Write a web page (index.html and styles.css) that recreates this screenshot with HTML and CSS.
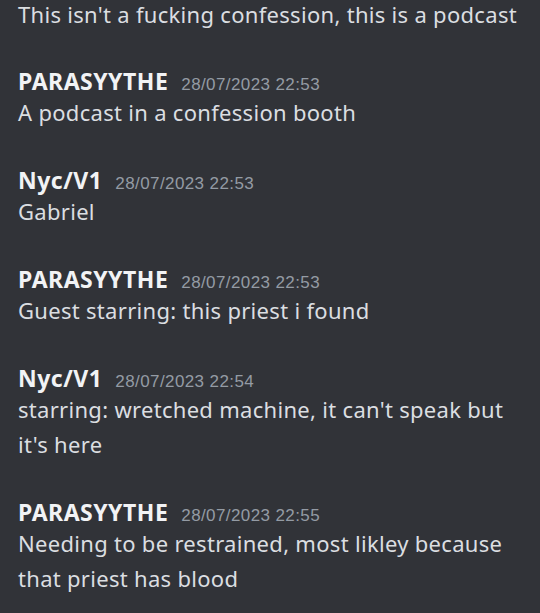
FILE: index.html
```html
<!DOCTYPE html>
<html lang="en">
<head>
    <meta charset="UTF-8">
    <title>Chat</title>
    <link rel="stylesheet" href="styles.css">
</head>
<body>
    <div class="chat">
        <div class="line first">This isn't a fucking confession, this is a podcast</div>

        <div class="msg">
            <div class="head"><span class="name">PARASYYTHE</span><span class="time">28/07/2023 22:53</span></div>
            <div class="line">A podcast in a confession booth</div>
        </div>

        <div class="msg">
            <div class="head"><span class="name">Nyc/V1</span><span class="time">28/07/2023 22:53</span></div>
            <div class="line">Gabriel</div>
        </div>

        <div class="msg">
            <div class="head"><span class="name">PARASYYTHE</span><span class="time">28/07/2023 22:53</span></div>
            <div class="line">Guest starring: this priest i found</div>
        </div>

        <div class="msg">
            <div class="head"><span class="name">Nyc/V1</span><span class="time">28/07/2023 22:54</span></div>
            <div class="line">starring: wretched machine, it can't speak but it's here</div>
        </div>

        <div class="msg">
            <div class="head"><span class="name">PARASYYTHE</span><span class="time">28/07/2023 22:55</span></div>
            <div class="line">Needing to be restrained, most likley because that priest has blood</div>
        </div>
    </div>
</body>
</html>
```

FILE: styles.css
```css
body {
    margin: 0;
    background-color: #313338;
    font-family: "Noto Sans", sans-serif;
}
.chat {
    padding: 0 18px;
    width: 504px;
}
.line {
    color: #dbdee1;
    font-size: 22px;
    letter-spacing: 0.3px;
    line-height: 35px;
    margin-top: -3px;
}
.line.first {
    margin-top: 0;
    padding-bottom: 3px;
    line-height: 28px;
}
.msg {
    margin-top: 33px;
}
.head {
    display: flex;
    align-items: baseline;
    height: 34px;
    line-height: 34px;
}
.name {
    color: #f2f3f5;
    font-size: 23px;
    font-weight: bold;
    letter-spacing: 0.5px;
}
.time {
    color: #949ba4;
    font-family: "Liberation Sans", sans-serif;
    font-size: 17px;
    letter-spacing: 0.4px;
    margin-left: 13px;
}
```
